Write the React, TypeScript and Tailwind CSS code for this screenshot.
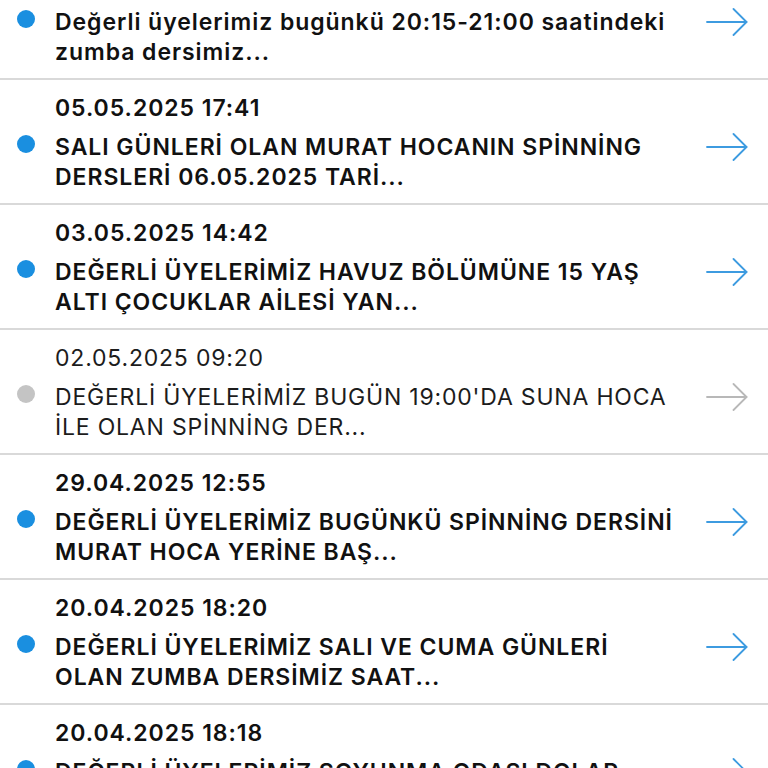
import React from "react";

type Item = { date?: string; lines: [string, string]; unread: boolean };

const items: Item[] = [
  { lines: ["Değerli üyelerimiz bugünkü 20:15-21:00 saatindeki", "zumba dersimiz..."], unread: true },
  { date: "05.05.2025 17:41", lines: ["SALI GÜNLERİ OLAN MURAT HOCANIN SPİNNİNG", "DERSLERİ 06.05.2025 TARİ..."], unread: true },
  { date: "03.05.2025 14:42", lines: ["DEĞERLİ ÜYELERİMİZ HAVUZ BÖLÜMÜNE 15 YAŞ", "ALTI ÇOCUKLAR AİLESİ YAN..."], unread: true },
  { date: "02.05.2025 09:20", lines: ["DEĞERLİ ÜYELERİMİZ BUGÜN 19:00'DA SUNA HOCA", "İLE OLAN SPİNNİNG DER..."], unread: false },
  { date: "29.04.2025 12:55", lines: ["DEĞERLİ ÜYELERİMİZ BUGÜNKÜ SPİNNİNG DERSİNİ", "MURAT HOCA YERİNE BAŞ..."], unread: true },
  { date: "20.04.2025 18:20", lines: ["DEĞERLİ ÜYELERİMİZ SALI VE CUMA GÜNLERİ", "OLAN ZUMBA DERSİMİZ SAAT..."], unread: true },
  { date: "20.04.2025 18:18", lines: ["DEĞERLİ ÜYELERİMİZ SOYUNMA ODASI DOLAP", "KULLANIMI HAKKINDA..."], unread: true },
];

function Arrow({ color }: { color: string }) {
  return (
    <svg width="42" height="28" viewBox="0 0 42 28" fill="none">
      <path d="M1 14H40.5" stroke={color} strokeWidth="1.8" strokeLinecap="round" />
      <path d="M27.5 1L40.5 14L27.5 27" stroke={color} strokeWidth="1.8" strokeLinecap="round" strokeLinejoin="round" />
    </svg>
  );
}

function Row({ item, first }: { item: Item; first: boolean }) {
  const text = item.unread
    ? "font-semibold text-[#111111] tracking-[0.95px]"
    : "font-normal text-[#1c1c1c] tracking-[0.8px]";
  return (
    <div className={`border-b-2 border-[#d9d9d9] ${first ? "pt-[7px]" : "pt-[13px]"} pb-[11px]`}>
      {item.date && (
        <div className={`pl-[55px] h-[30px] leading-[30px] text-[23px] whitespace-nowrap mb-[9px] ${text}`}>{item.date}</div>
      )}
      <div className="flex">
        <div className="w-[55px] shrink-0 flex pl-[17px] pt-[3px]">
          <div className={`w-[18px] h-[18px] rounded-full ${item.unread ? "bg-[#1a8fe0]" : "bg-[#c4c4c4]"}`} />
        </div>
        <div className={`flex-1 text-[23px] leading-[30px] ${text}`}>
          <div className="whitespace-nowrap">{item.lines[0]}</div>
          <div className="whitespace-nowrap">{item.lines[1]}</div>
        </div>
        <div className="w-[62px] shrink-0 pt-[1px]">
          <Arrow color={item.unread ? "#3d9be0" : "#b8b8b8"} />
        </div>
      </div>
    </div>
  );
}

export default function App() {
  return (
    <div className="w-[768px] h-[768px] overflow-hidden bg-white" style={{ fontFamily: "Inter, 'Noto Sans', sans-serif" }}>
      {items.map((it, i) => (
        <Row key={i} item={it} first={i === 0} />
      ))}
    </div>
  );
}
